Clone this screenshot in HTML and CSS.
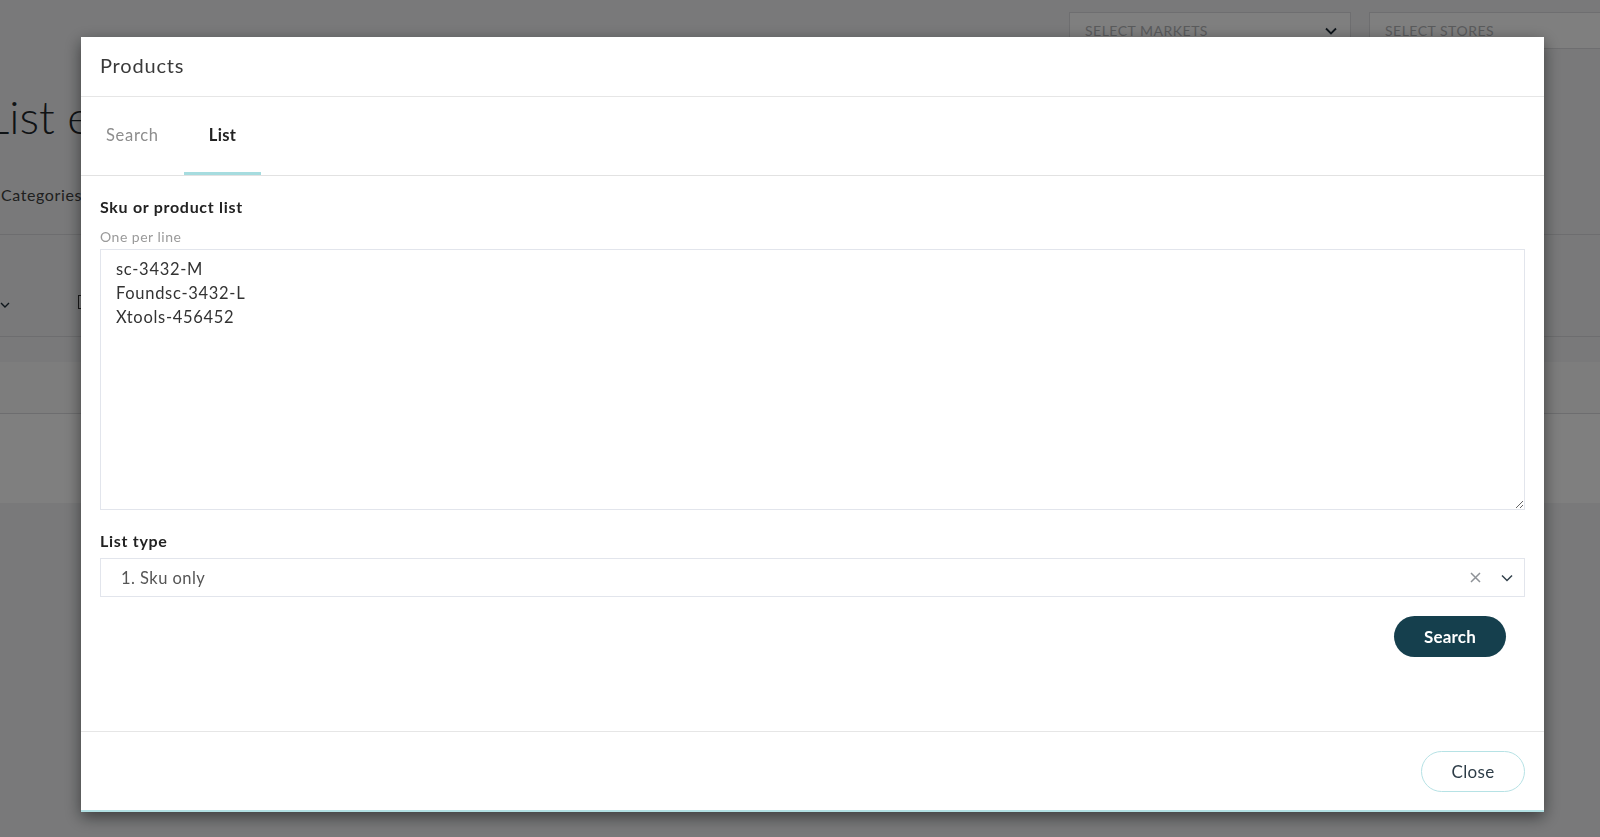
FILE: index.html
```html
<!DOCTYPE html>
<html>
<head>
    <title>Products</title>
    <link rel="stylesheet" href="styles.css">
</head>
<body>
    <div class="page">
        <div class="topbar">
            <div class="picker markets">
                <span>SELECT MARKETS</span>
                <svg width="12" height="8" viewBox="0 0 12 8"><path d="M1 1.5 6 6.5 11 1.5" fill="none" stroke="#1d2b36" stroke-width="1.8"/></svg>
            </div>
            <div class="picker stores"><span>SELECT STORES</span></div>
        </div>
        <h1 class="page-title">List editor</h1>
        <div class="page-tabs">Categories</div>
        <div class="grid-row first">
            <svg width="10" height="8" viewBox="0 0 10 8"><path d="M1 2 5 6 9 2" fill="none" stroke="#1d2b36" stroke-width="1.4"/></svg>
            <span class="check"></span>
        </div>
        <div class="grid-row band"></div>
        <div class="grid-row plain"></div>
    </div>

    <div class="backdrop"></div>

    <div class="modal">
        <div class="modal-header">Products</div>
        <div class="tabs">
            <div class="tab">Search</div>
            <div class="tab active">List</div>
        </div>
        <div class="modal-body">
            <label class="field-label" for="skus">Sku or product list</label>
            <div class="hint">One per line</div>
            <textarea id="skus">sc-3432-M
Foundsc-3432-L
Xtools-456452</textarea>

            <div class="field-label second">List type</div>
            <div class="select">
                <span class="select-value">1. Sku only</span>
                <svg class="clear" width="11" height="11" viewBox="0 0 11 11"><path d="M1 1 10 10M10 1 1 10" stroke="#8e9297" stroke-width="1.5"/></svg>
                <svg class="caret" width="12" height="8" viewBox="0 0 12 8"><path d="M1 1.5 6 6.5 11 1.5" fill="none" stroke="#33414c" stroke-width="1.5"/></svg>
            </div>
            <div class="actions">
                <button type="button" class="btn-search">Search</button>
            </div>
        </div>
        <div class="modal-footer">
            <button type="button" class="btn-close">Close</button>
        </div>
    </div>
</body>
</html>
```

FILE: styles.css
```css
body {
    margin: 0;
    height: 837px;
    overflow: hidden;
    font-family: 'Lato', 'Noto Sans', sans-serif;
    background-color: #f2f3f5;
}

/* page behind the dialog */
.topbar {
    display: flex;
    gap: 18px;
    padding: 12px 0 0 1069px;
}

.picker {
    height: 37px;
    box-sizing: border-box;
    border: 1px solid #dcdde0;
    background-color: #fff;
    display: flex;
    align-items: center;
    justify-content: space-between;
    padding: 0 13px 0 15px;
    font-size: 14px;
    letter-spacing: 0.5px;
    color: #b4b6b9;
    flex-shrink: 0;
}

.markets {
    width: 282px;
}

.stores {
    width: 282px;
}

.page-title {
    margin: 42px 0 0 -14px;
    font-size: 46px;
    line-height: 52px;
    font-weight: 300;
    color: #1f262b;
}

.page-tabs {
    margin-top: 41px;
    padding: 0 0 28px 1px;
    font-size: 16px;
    line-height: 22px;
    letter-spacing: 0.6px;
    color: #3f4040;
    border-bottom: 1px solid #dadbde;
}

.grid-row {
    border-bottom: 1px solid #dadbde;
}

.grid-row.first {
    height: 102px;
    box-sizing: border-box;
    display: flex;
    align-items: flex-end;
    gap: 68px;
    padding-bottom: 27px;
}

.check {
    width: 12px;
    height: 12px;
    border: 1px solid #333;
}

.grid-row.band {
    margin-top: 25px;
    height: 51px;
    background-color: #fafafa;
}

.grid-row.plain {
    height: 89px;
    background-color: #fff;
    border-bottom: none;
}

.backdrop {
    position: fixed;
    top: 0;
    left: 0;
    right: 0;
    bottom: 0;
    background-color: rgba(0, 0, 0, 0.5);
}

/* dialog */
.modal {
    position: fixed;
    top: 37px;
    left: 81px;
    width: 1463px;
    background-color: #fff;
    border-bottom: 2px solid #b2e0e3;
    box-shadow: 0 5px 15px rgba(0, 0, 0, 0.5);
    letter-spacing: 0.7px;
}

.modal-header {
    height: 56px;
    padding: 0 19px 3px;
    display: flex;
    align-items: center;
    font-size: 20px;
    letter-spacing: 0.8px;
    color: #3a3a3a;
    border-bottom: 1px solid #e6e6e6;
}

.tabs {
    display: flex;
    border-bottom: 1px solid #e2e2e2;
}

.tab {
    height: 78px;
    box-sizing: border-box;
    padding: 1px 25px 0;
    display: flex;
    align-items: center;
    font-size: 16.5px;
    color: #8d8d8d;
    border-bottom: 3px solid transparent;
}

.tab.active {
    color: #222;
    font-weight: 700;
    letter-spacing: 0.3px;
    border-bottom-color: #a6dcdf;
}

.modal-body {
    padding: 20px 19px 74px;
}

.field-label {
    display: block;
    font-size: 16px;
    line-height: 22px;
    font-weight: 700;
    color: #222;
}

.field-label.second {
    margin-top: 20px;
}

.hint {
    margin-top: 10px;
    font-size: 14px;
    line-height: 18px;
    letter-spacing: 0.5px;
    color: #9a9a9a;
}

textarea {
    display: block;
    margin-top: 3px;
    width: 100%;
    height: 261px;
    box-sizing: border-box;
    border: 1px solid #e2e5ec;
    padding: 7px 15px;
    font-family: inherit;
    font-size: 16.5px;
    line-height: 24px;
    letter-spacing: 0.7px;
    color: #333;
    resize: vertical;
    outline: none;
}

.select {
    margin-top: 6px;
    height: 39px;
    box-sizing: border-box;
    border: 1px solid #e2e5ec;
    display: flex;
    align-items: center;
    padding: 0 11px 0 20px;
    font-size: 16.5px;
    letter-spacing: 0.45px;
    color: #555;
}

.select-value {
    flex: 1;
}

.clear {
    margin-right: 20px;
}

.actions {
    display: flex;
    justify-content: flex-end;
    margin-top: 19px;
    padding-right: 19px;
}

.btn-search {
    height: 41px;
    width: 112px;
    border: none;
    border-radius: 21px;
    background-color: #153f4d;
    color: #fff;
    font-family: inherit;
    font-size: 17px;
    font-weight: 700;
    letter-spacing: 0.2px;
    cursor: pointer;
}

.modal-footer {
    border-top: 1px solid #e6e6e6;
    padding: 19px 19px 18px;
    display: flex;
    justify-content: flex-end;
}

.btn-close {
    height: 41px;
    width: 104px;
    border: 1px solid #b6e2e5;
    border-radius: 21px;
    background-color: #fff;
    color: #2d3c47;
    font-family: inherit;
    font-size: 17px;
    letter-spacing: 0.3px;
    cursor: pointer;
}
```
